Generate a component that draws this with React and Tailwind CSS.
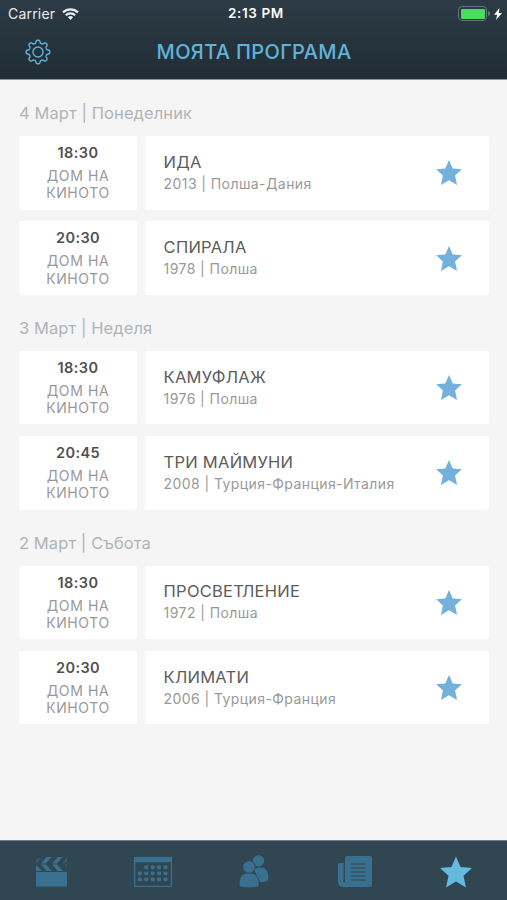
import React from "react";

const days = [
  {
    label: "4 Март | Понеделник",
    films: [
      ["18:30", "ИДА", "2013 | Полша-Дания"],
      ["20:30", "СПИРАЛА", "1978 | Полша"],
    ],
  },
  {
    label: "3 Март | Неделя",
    films: [
      ["18:30", "КАМУФЛАЖ", "1976 | Полша"],
      ["20:45", "ТРИ МАЙМУНИ", "2008 | Турция-Франция-Италия"],
    ],
  },
  {
    label: "2 Март | Събота",
    films: [
      ["18:30", "ПРОСВЕТЛЕНИЕ", "1972 | Полша"],
      ["20:30", "КЛИМАТИ", "2006 | Турция-Франция"],
    ],
  },
];

function Star({ className }) {
  return (
    <svg viewBox="0 0 32 31" className={className} fill="currentColor">
      <path d="M16 0l4.600 10.500L32 11.600l-8.500 7.700L26 31l-10-6L6 31l2.500-11.700L0 11.600l11.400-1.100z" />
    </svg>
  );
}

function Gear() {
  const points = [];
  for (let i = 0; i < 160; i++) {
    const a = (i / 160) * Math.PI * 2;
    const r = 10.4 + 1.5 * Math.tanh(1.8 * Math.cos(8 * a));
    points.push(`${(13 + r * Math.cos(a)).toFixed(2)},${(13 + r * Math.sin(a)).toFixed(2)}`);
  }
  return (
    <svg viewBox="0 0 26 26" className="size-[26px]" fill="none" stroke="currentColor" strokeWidth="1.4">
      <polygon points={points.join(" ")} strokeLinejoin="round" />
      <circle cx="13" cy="13" r="5" />
    </svg>
  );
}

function Wifi() {
  return (
    <svg viewBox="0 0 17 12" className="h-[12px] w-[17px]" fill="none" stroke="currentColor" strokeWidth="2.2">
      <path d="M1 4.400a10.800 10.800 0 0 1 15 0M3.800 7.300a6.700 6.700 0 0 1 9.400 0" />
      <path d="M8.500 11.900L5.900 9.300a3.700 3.700 0 0 1 5.200 0z" fill="currentColor" stroke="none" />
    </svg>
  );
}

function Clapper() {
  return (
    <svg viewBox="0 0 32 31" className="h-[31px] w-[32px]" fill="currentColor">
      <path d="M0 16h31v14.500H0z" />
      <path d="M10.500 1h5L10 7.500H5zM21.500 1h5L21 7.500h-5zM5 8.500h5l6 6.500h-5.500zM16 8.500h5l6 6.500h-5.500zM0 8.500L6 15H0z" />
      <path d="M0 4.500L3 2h2L0 7.500zM31 2v3l-3 2.500h-2zM27 8.500h4v2z" opacity="0.6" />
    </svg>
  );
}

function Calendar() {
  const dots = [];
  for (let r = 0; r < 3; r++)
    for (let c = r === 0 ? 1 : 0; c < 5; c++) dots.push([3.9 + c * 6.4, 8.5 + r * 6]);
  return (
    <svg viewBox="0 0 38 30" className="h-[30px] w-[38px]" fill="currentColor">
      <path d="M0 0h38v30H0zM1.300 5.200v23.500h35.400v-23.500z" fillRule="evenodd" />
      {dots.map(([x, y]) => (
        <rect key={`${x}-${y}`} x={x} y={y} width="4" height="3.800" rx="1.200" />
      ))}
    </svg>
  );
}

function People() {
  return (
    <svg viewBox="0 0 30 33" className="h-[33px] w-[30px]" fill="currentColor">
      <circle cx="19.500" cy="5.800" r="5.600" />
      <path d="M15 14.500c2-2 6-2.500 9.500-1.500 3.500 1.200 5 5 4.900 11.500-1.500 2-4.500 2.600-8.400 2.500z" />
      <g stroke="#304650" strokeWidth="0.8">
        <path d="M.3 31c-.8-8 2-13.300 9.700-13.300S20.600 23 20 31c-2 2.500-17.700 2.500-19.700 0z" />
        <circle cx="10" cy="12" r="6.2" />
      </g>
    </svg>
  );
}

function News() {
  return (
    <svg viewBox="0 0 34 31" className="h-[31px] w-[34px]" fill="currentColor">
      <path d="M9 0h23q2 0 2 2v27q0 2-2 2H5q-5 0-5-5V8.500Q0 7 1.500 7H5.500v18q0 1.500.8 1.500T7 25V2q0-2 2-2z" />
      <path d="M13 8h14.500M13 12h14.500M13 16h14.500M13 20h14.500M13 24h14.500" stroke="#304650" strokeWidth="1.2" />
    </svg>
  );
}

function Film({ film: [time, title, info] }) {
  return (
    <div className="flex h-[73.5px] gap-2">
      <div className="flex w-[118px] flex-col items-center rounded-[2px] bg-white pt-[8px] text-center">
        <div className="text-[14.5px] leading-[18px] font-semibold tracking-[0.4px] text-[#505050]">{time}</div>
        <div className="mt-[5px] text-[14px] leading-[17.2px] tracking-[0.6px] text-[#999]">
          ДОМ НА<br />КИНОТО
        </div>
      </div>
      <div className="flex flex-1 items-center justify-between rounded-[2px] bg-white pr-[27px] pl-[18.6px]">
        <div className="whitespace-nowrap">
          <div className="text-[16.5px] leading-[22px] tracking-[0.25px] text-[#5c5c5c]">{title}</div>
          <div className="text-[14px] leading-[22px] tracking-[0.42px] text-[#999]">{info}</div>
        </div>
        <Star className="h-[25px] w-[26px] text-[#73b1dc]" />
      </div>
    </div>
  );
}

export default function App() {
  return (
    <div className="flex h-[900px] w-[507px] flex-col overflow-hidden bg-[#f5f5f5] font-['Inter','Liberation_Sans',sans-serif]">
      <header className="h-[80px] shrink-0 border-b border-[#8b9599] bg-linear-to-b from-[#2c3b45] to-[#202d35]">
        <div className="grid h-[27px] grid-cols-3 items-center pr-[5px] pl-[8px] text-white">
          <div className="flex items-center gap-[7px] text-[14px] tracking-[0.2px] text-[#e9eef0]">
            Carrier
            <Wifi />
          </div>
          <div className="pl-[2px] text-center text-[13.5px] font-semibold tracking-[0.6px]">2:13 PM</div>
          <div className="flex items-center justify-end">
            <div className="h-[15px] w-[29px] rounded-[4px] border-[1.5px] border-[#66737a] p-[1.5px]">
              <div className="h-full rounded-[1px] bg-[#4cd964]" />
            </div>
            <div className="mr-[4px] ml-[1px] h-[5px] w-[2px] rounded-r bg-[#66737a]" />
            <svg viewBox="0 0 8 12" className="h-[12px] w-[8px]" fill="currentColor">
              <path d="M5.500 0L0 6.800h3.200L2 12l6-7H4.700z" />
            </svg>
          </div>
        </div>
        <div className="grid h-[50px] grid-cols-[64px_1fr_64px] items-center text-[#63b2d9]">
          <div className="pl-[24.5px]"><Gear /></div>
          <h1 className="pl-[1px] text-center text-[20px] font-medium tracking-[0.35px]">МОЯТА ПРОГРАМА</h1>
        </div>
      </header>
      <main className="flex-1 pr-[18px] pl-[19px]">
        {days.map((day) => (
          <section key={day.label}>
            <h2 className="h-[56px] pt-[22px] text-[16.5px] leading-[22px] tracking-[0.08px] text-[#b0b4b6]">{day.label}</h2>
            <div className="flex flex-col gap-[11.8px]">
              {day.films.map((film) => (
                <Film key={film[0]} film={film} />
              ))}
            </div>
          </section>
        ))}
      </main>
      <nav className="grid h-[60px] shrink-0 grid-cols-5 items-center justify-items-center border-t border-[#6f7c82] bg-[#304650] pt-[2px] pl-[1px] text-[#3a708f]">
        <Clapper />
        <Calendar />
        <People />
        <News />
        <Star className="h-[32px] w-[32px] text-[#65b9df]" />
      </nav>
    </div>
  );
}
